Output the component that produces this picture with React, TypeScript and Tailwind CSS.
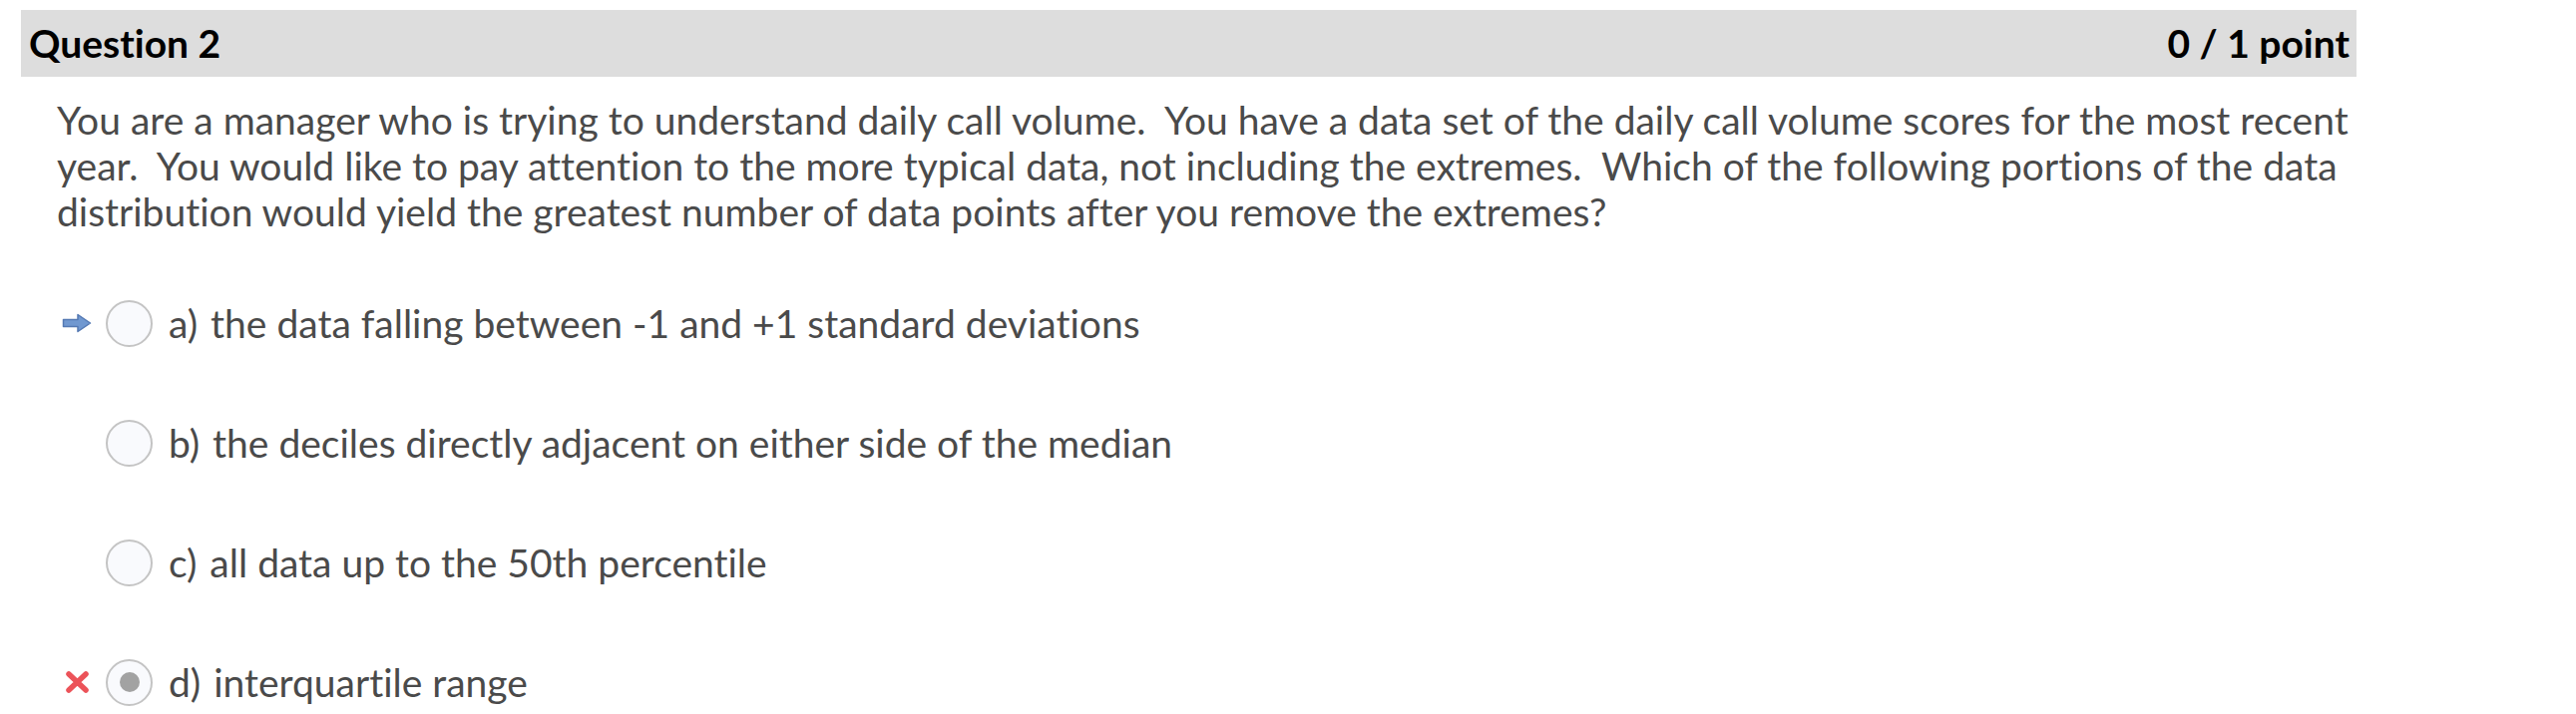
import React from 'react'

type Option = {
  label: string
  text: string
  marker?: 'arrow' | 'wrong'
  selected?: boolean
}

const options: Option[] = [
  { label: 'a)', text: 'the data falling between -1 and +1 standard deviations', marker: 'arrow' },
  { label: 'b)', text: 'the deciles directly adjacent on either side of the median' },
  { label: 'c)', text: 'all data up to the 50th percentile' },
  { label: 'd)', text: 'interquartile range', marker: 'wrong', selected: true },
]

function ArrowIcon() {
  return (
    <svg width="30" height="20" viewBox="0 0 30 20">
      <path
        d="M1.5 6.5 H16 V1.5 L28.5 10 L16 18.5 V13.5 H1.5 Z"
        fill="#7098d0"
        stroke="#5479b3"
        strokeWidth="1.5"
        strokeLinejoin="round"
      />
    </svg>
  )
}

function WrongIcon() {
  return (
    <svg width="25" height="24" viewBox="0 0 25 24">
      <path
        d="M4 4 L21 20 M21 4 L4 20"
        stroke="#ec5359"
        strokeWidth="5.5"
        strokeLinecap="round"
      />
    </svg>
  )
}

export default function App() {
  return (
    <div className="h-[716px] w-[2582px] bg-white font-['Lato','Noto_Sans',sans-serif] [font-variant-ligatures:none]">
      <div className="ml-[21px] w-[2341px] pt-[10px]">
        {/* header bar */}
        <div className="flex h-[67px] items-center justify-between bg-[#dddddd] pl-[8px] pr-[7px] text-[39px] font-bold text-black">
          <span>Question 2</span>
          <span>0 / 1 point</span>
        </div>

        <div className="pl-[36px] pt-[20px] text-[39px] leading-[46px] text-[#4a4a4a]">
          <p className="whitespace-pre">
            {'You are a manager who is trying to understand daily call volume.  You have a data set of the daily call volume scores for the most recent'}
            <br />
            {'year.  You would like to pay attention to the more typical data, not including the extremes.  Which of the following portions of the data'}
            <br />
            {'distribution would yield the greatest number of data points after you remove the extremes?'}
          </p>

          <div className="mt-[29px]">
            {options.map((o) => (
              <div key={o.label} className="flex h-[120px] items-center">
                <div className="ml-[5px] flex w-[30px] items-center justify-center">
                  {o.marker === 'arrow' && <ArrowIcon />}
                  {o.marker === 'wrong' && <WrongIcon />}
                </div>
                <div className="ml-[14px] flex h-[47px] w-[47px] items-center justify-center rounded-full border-2 border-[#c4c4c4] bg-[#f9fafd]">
                  {o.selected && <div className="h-[20px] w-[20px] rounded-full bg-[#a2a2a2]" />}
                </div>
                <span className="ml-[16px] whitespace-pre">
                  <span className="mr-[3px]">{o.label}</span> {o.text}
                </span>
              </div>
            ))}
          </div>
        </div>
      </div>
    </div>
  )
}
